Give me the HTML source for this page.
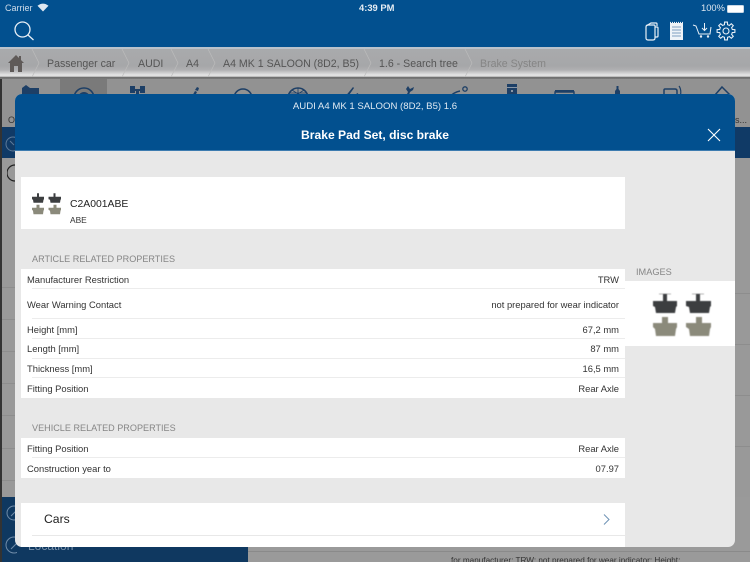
<!DOCTYPE html>
<html><head><meta charset="utf-8">
<style>
html,body{margin:0;padding:0;width:750px;height:562px;overflow:hidden}
#w{width:750px;height:562px;overflow:hidden;position:relative;background:#9a9a9a;font-family:"Liberation Sans",sans-serif;color:#222}
.a{position:absolute}
.t{position:absolute;white-space:nowrap;line-height:14px}
.row{position:absolute;left:21px;width:604px;background:#fff}
.row .l{position:absolute;left:6px;top:50%;margin-top:-6.5px;line-height:14px;font-size:9.4px;color:#333}
.row .r{position:absolute;right:6px;top:50%;margin-top:-6.5px;line-height:14px;font-size:9.4px;color:#333}
.sep{position:absolute;left:32px;width:593px;height:1px;background:#ececec}
.sh{position:absolute;left:32px;font-size:9.1px;color:#868686;line-height:14px;white-space:nowrap}
.bc{position:absolute;top:57px;font-size:10.6px;color:#555;line-height:14px;white-space:nowrap}
.ln{position:absolute;height:1px;background:#8d8d8d}
</style></head><body><div id="w">
<div class="a" style="left:0;top:0;width:750px;height:47px;background:#02508f"></div>
<div class="t" style="left:5px;top:1px;font-size:9px;color:#cfdcea">Carrier</div>
<svg class="a" style="left:37px;top:3px" width="12" height="9" viewBox="0 0 12 9"><path d="M6 8.5L0.5 2.8Q6-1.5 11.5 2.8Z" fill="#dfe8f1"/></svg>
<div class="t" style="left:359px;top:1px;font-size:9.4px;color:#e6edf4;font-weight:bold">4:39 PM</div>
<div class="t" style="left:701px;top:1px;font-size:9.4px;color:#dbe5ef">100%</div>
<div class="a" style="left:727px;top:5px;width:15px;height:6px;background:#fff;border:1px solid #c9d8e6;border-radius:1.5px;box-sizing:content-box"></div>
<svg class="a" style="left:13px;top:21px" width="22" height="20" viewBox="0 0 22 20" fill="none" stroke="#e8eff6" stroke-width="1.3"><circle cx="9.5" cy="8.5" r="7.500"/><path d="M15 14l5.500 5"/></svg>
<svg class="a" style="left:643px;top:20px" width="94" height="22" viewBox="0 0 94 22" fill="none" stroke="#e8eff6" stroke-width="1.2">
<path d="M3 7q0-2 2-2h6q1 0 1 1v12q0 2-2 2H5q-2 0-2-2z"/><path d="M3 6l5-3h5q1 0 1 1v2"/><path d="M12 7h2q1 0 1 1v8q0 1-1 1h-2"/>
<rect x="27" y="3" width="13" height="17" fill="#eef3f8" stroke="none"/><path d="M27 2.500h13" stroke-dasharray="1 1"/><path d="M29 7h9M29 10h9M29 13h9M29 16h9" stroke="#7f9fc0" stroke-width=".9"/>
<path d="M50 5l3 1 3 8h11l1-7" stroke-width="1"/><circle cx="58" cy="16.500" r="1.200" fill="#e8eff6" stroke="none"/><circle cx="65" cy="16.500" r="1.200" fill="#e8eff6" stroke="none"/><path d="M61.500 3v7M59 8l2.500 2.500L64 8" stroke-width="1"/>
<g transform="translate(83 11)" stroke-width="1.100">
<path d="M-2.490-6L-1.570-6.300L-1.400-8.900H1.400L1.570-6.300L2.490-6"/>
<path transform="rotate(45)" d="M-2.490-6L-1.570-6.300L-1.400-8.900H1.400L1.570-6.300L2.490-6"/>
<path transform="rotate(90)" d="M-2.490-6L-1.570-6.300L-1.400-8.900H1.400L1.570-6.300L2.490-6"/>
<path transform="rotate(135)" d="M-2.490-6L-1.570-6.300L-1.400-8.900H1.400L1.570-6.300L2.490-6"/>
<path transform="rotate(180)" d="M-2.490-6L-1.570-6.300L-1.400-8.900H1.400L1.570-6.300L2.490-6"/>
<path transform="rotate(225)" d="M-2.490-6L-1.570-6.300L-1.400-8.900H1.400L1.570-6.300L2.490-6"/>
<path transform="rotate(270)" d="M-2.490-6L-1.570-6.300L-1.400-8.900H1.400L1.570-6.300L2.490-6"/>
<path transform="rotate(315)" d="M-2.490-6L-1.570-6.300L-1.400-8.900H1.400L1.570-6.300L2.490-6"/>
<circle r="3"/></g>
</svg>
<div class="a" style="left:0;top:47px;width:750px;height:32px;background:linear-gradient(#b9c2cc 0,#b9c2cc 2px,#a9aaac 2px,#a6a7a9 19px,#b0b0b2 23px,#e4e4e4 28px,#d8d8d8 29.500px,#6d6d6d 30px,#7a7a7a 32px)"></div>
<svg class="a" style="left:0;top:49px" width="500" height="28" viewBox="0 0 500 28" fill="none" stroke="#bcbcbc" stroke-width=".7"><path d="M32 0l7 14-7 14M122 0l7 14-7 14M171 0l7 14-7 14M208 0l7 14-7 14M364 0l7 14-7 14M465 0l7 14-7 14"/></svg>
<svg class="a" style="left:8px;top:55px" width="16" height="17" viewBox="0 0 16 17"><path d="M8 0L0 8h2v9h4v-6h4v6h4V8h2L13 5V1h-2v2z" fill="#5f5a58"/></svg>
<div class="bc" style="left:47px">Passenger car</div>
<div class="bc" style="left:138px">AUDI</div>
<div class="bc" style="left:186px">A4</div>
<div class="bc" style="left:223px">A4 MK 1 SALOON (8D2, B5)</div>
<div class="bc" style="left:379px">1.6 - Search tree</div>
<div class="bc" style="left:480px;color:#858585">Brake System</div>
<div class="a" style="left:0;top:79px;width:750px;height:48px;background:#929292"></div>
<div class="a" style="left:60px;top:79px;width:47px;height:20px;background:#7a7a7a"></div>
<svg class="a" style="left:0;top:80px" width="750" height="18" viewBox="0 0 750 18" fill="#1d3f66" stroke="none">
<path d="M22 8l4-3 4 3h9v10H22z"/>
<circle cx="84" cy="18" r="10" fill="none" stroke="#1d3f66" stroke-width="1.600"/><circle cx="84" cy="18" r="5" fill="none" stroke="#1d3f66" stroke-width="2"/>
<rect x="130" y="6" width="5" height="7"/><rect x="140" y="6" width="5" height="7"/><rect x="135" y="9" width="5" height="2"/><rect x="136" y="11" width="3" height="7"/>
<path d="M191 18l4-7 2 1-3 6zM195 10l2-3 2 1-1 3z"/>
<circle cx="243" cy="18" r="9" fill="none" stroke="#1d3f66" stroke-width="1.600"/>
<circle cx="298" cy="18" r="10" fill="none" stroke="#1d3f66" stroke-width="1.600"/><path d="M298 8v10M290 13l16 0M292 10l12 8M304 10l-12 8" stroke="#1d3f66" stroke-width=".8" fill="none"/>
<path d="M344 18l9-11 1 1-7 10zM354 15l4-2 1 5h-5z"/>
<path d="M405 18l3-6-2-3 2-3 2 3 4-2-1 3-3 2-2 6z"/>
<path d="M448 18q6-6 12-7" fill="none" stroke="#1d3f66" stroke-width="1.400"/><circle cx="465" cy="9" r="2.200" fill="none" stroke="#1d3f66" stroke-width="1.300"/>
<path d="M507 4h10v14h-10z"/><rect x="507" y="7" width="10" height="1" fill="#8a97a6"/><rect x="511" y="10" width="2" height="2" fill="#8a97a6"/>
<path d="M555 12h19v6h-19z" fill="none" stroke="#1d3f66" stroke-width="1.400"/><rect x="555" y="10" width="19" height="2"/>
<path d="M615 18V11l1.500-2V6h2v3l1.500 2v7z"/>
<path d="M664 18v-8q0-1 1-1h10q2 0 2 2v7" fill="none" stroke="#1d3f66" stroke-width="1.500"/><path d="M679 6q3 4 1 12" fill="none" stroke="#1d3f66" stroke-width="1.200"/>
<path d="M722 7l7 7-4 4h-7l-3-3z" fill="none" stroke="#1d3f66" stroke-width="1.500"/>
</svg>
<div class="t" style="left:8px;top:113px;font-size:9px;color:#333">Op</div>
<div class="t" style="left:735px;top:113px;font-size:9px;color:#333">s...</div>
<div class="a" style="left:0;top:127px;width:750px;height:31px;background:#103a66"></div>
<svg class="a" style="left:5px;top:135px" width="12" height="18" fill="none" stroke="#5d7a99"><circle cx="8" cy="9" r="7"/><path d="M5 6l4 4"/></svg>
<div class="a" style="left:0;top:158px;width:750px;height:339px;background:#999"></div>
<div class="ln" style="left:2px;top:287px;width:13px"></div><div class="ln" style="left:2px;top:319px;width:13px"></div><div class="ln" style="left:2px;top:351px;width:13px"></div><div class="ln" style="left:2px;top:383px;width:13px"></div><div class="ln" style="left:2px;top:415px;width:13px"></div><div class="ln" style="left:2px;top:448px;width:13px"></div><div class="ln" style="left:2px;top:480px;width:13px"></div>
<div class="ln" style="left:735px;top:293px;width:15px"></div><div class="ln" style="left:735px;top:344px;width:15px"></div><div class="ln" style="left:735px;top:395px;width:15px"></div><div class="ln" style="left:735px;top:446px;width:15px"></div><div class="ln" style="left:735px;top:502px;width:15px"></div>
<svg class="a" style="left:7px;top:164px" width="9" height="18" fill="none" stroke="#222" stroke-width="1.200"><path d="M8 1a8 8 0 0 0 0 16"/></svg>
<div class="a" style="left:0;top:497px;width:248px;height:65px;background:#0f3860"></div>
<svg class="a" style="left:5px;top:505px" width="12" height="50" fill="none" stroke="#6f8ba8"><circle cx="9" cy="8" r="7"/><path d="M6 11l6-6"/><circle cx="9" cy="40" r="8"/><path d="M6 44l7-7"/></svg>
<div class="t" style="left:28px;top:539px;font-size:12px;color:#7c94ad">Location</div>
<div class="a" style="left:248px;top:497px;width:502px;height:65px;background:#9a9a9a"></div>
<div class="a" style="left:248px;top:551px;width:502px;height:1px;background:#8a8a8a"></div>
<div class="t" style="left:451px;top:554px;font-size:8.200px;color:#333">for manufacturer: TRW; not prepared for wear indicator; Height:</div>
<div class="a" style="left:0;top:79px;width:2px;height:483px;background:#333"></div>
<div class="a" style="left:15px;top:94px;width:720px;height:453px;background:#e8e8e8;border-radius:7px;overflow:hidden">
<div class="a" style="left:0;top:0;width:720px;height:57px;background:#02508f;border-bottom:1px solid #3d7cb0;box-sizing:border-box"></div>
<div class="a" style="left:0;top:6px;width:720px;text-align:center;font-size:9.600px;line-height:14px;color:#dfe9f2">AUDI A4 MK 1 SALOON (8D2, B5) 1.6</div>
<div class="a" style="left:0;top:33px;width:720px;text-align:center;font-size:12.100px;line-height:16px;color:#fff;font-weight:bold">Brake Pad Set, disc brake</div>
<svg class="a" style="left:692px;top:34px" width="14" height="14" fill="none" stroke="#fff" stroke-width="1.100"><path d="M1 1l12 12M13 1L1 13"/></svg>
</div>
<div class="row" style="top:177px;height:52px"></div>
<svg class="a" style="left:31px;top:192px;filter:blur(.3px)" width="31" height="23" viewBox="0 0 62 45">
<g fill="#3c3e40"><path d="M12 2H16V9H26V14L25 15 24 21H5L4 15 2 14V9H12Z"/><path d="M45 2H49V9H60V14L59 15 58 21H39L38 15 35 14V9H45Z"/></g>
<g fill="#8b8a7b"><path d="M11 25H17V31H26V35L25 37 24 44H5L4 37 2 35V31H11Z"/><path d="M45 25H51V31H60V35L59 37 58 44H39L38 37 35 35V31H45Z"/></g></svg>
<div class="t" style="left:70px;top:198px;font-size:10.400px;color:#222">C2A001ABE</div>
<div class="t" style="left:70px;top:213px;font-size:8.400px;color:#333">ABE</div>
<div class="sh" style="top:252px">ARTICLE RELATED PROPERTIES</div>
<div class="row" style="top:269px;height:20px"><span class="l">Manufacturer Restriction</span><span class="r">TRW</span></div>
<div class="row" style="top:289px;height:30px"><span class="l">Wear Warning Contact</span><span class="r">not prepared for wear indicator</span></div>
<div class="row" style="top:319px;height:20px"><span class="l">Height [mm]</span><span class="r">67,2 mm</span></div>
<div class="row" style="top:339px;height:19px"><span class="l">Length [mm]</span><span class="r">87 mm</span></div>
<div class="row" style="top:358px;height:20px"><span class="l">Thickness [mm]</span><span class="r">16,5 mm</span></div>
<div class="row" style="top:378px;height:20px"><span class="l">Fitting Position</span><span class="r">Rear Axle</span></div>
<div class="sep" style="top:288px"></div><div class="sep" style="top:318px"></div><div class="sep" style="top:338px"></div><div class="sep" style="top:358px"></div><div class="sep" style="top:377px"></div>
<div class="sh" style="top:421px">VEHICLE RELATED PROPERTIES</div>
<div class="row" style="top:438px;height:20px"><span class="l">Fitting Position</span><span class="r">Rear Axle</span></div>
<div class="row" style="top:458px;height:20px"><span class="l">Construction year to</span><span class="r">07.97</span></div>
<div class="sep" style="top:457px"></div>
<div class="t" style="left:636px;top:265px;font-size:9.200px;color:#868686">IMAGES</div>
<div class="a" style="left:625px;top:281px;width:110px;height:65px;background:#fff"></div>
<svg class="a" style="left:651px;top:292px;filter:blur(.4px)" width="62" height="45" viewBox="0 0 62 45">
<path d="M8 2h12M41 2h12" stroke="#b5b5b5" fill="none"/>
<g fill="#3c3e40"><path d="M12 2H16V9H26V14L25 15 24 21H5L4 15 2 14V9H12Z"/><path d="M45 2H49V9H60V14L59 15 58 21H39L38 15 35 14V9H45Z"/></g>
<g fill="#8b8a7b"><path d="M11 25H17V31H26V35L25 37 24 44H5L4 37 2 35V31H11Z"/><path d="M45 25H51V31H60V35L59 37 58 44H39L38 37 35 35V31H45Z"/></g></svg>
<div class="row" style="top:503px;height:44px"></div>
<div class="t" style="left:44px;top:512px;font-size:12.200px;color:#222">Cars</div>
<div class="a" style="left:32px;top:535px;width:593px;height:1px;background:#e8e8e8"></div>
<svg class="a" style="left:603px;top:514px" width="7" height="11" fill="none" stroke="#6e92b5"><path d="M1 .5l5 5-5 5"/></svg>
</div></body></html>
